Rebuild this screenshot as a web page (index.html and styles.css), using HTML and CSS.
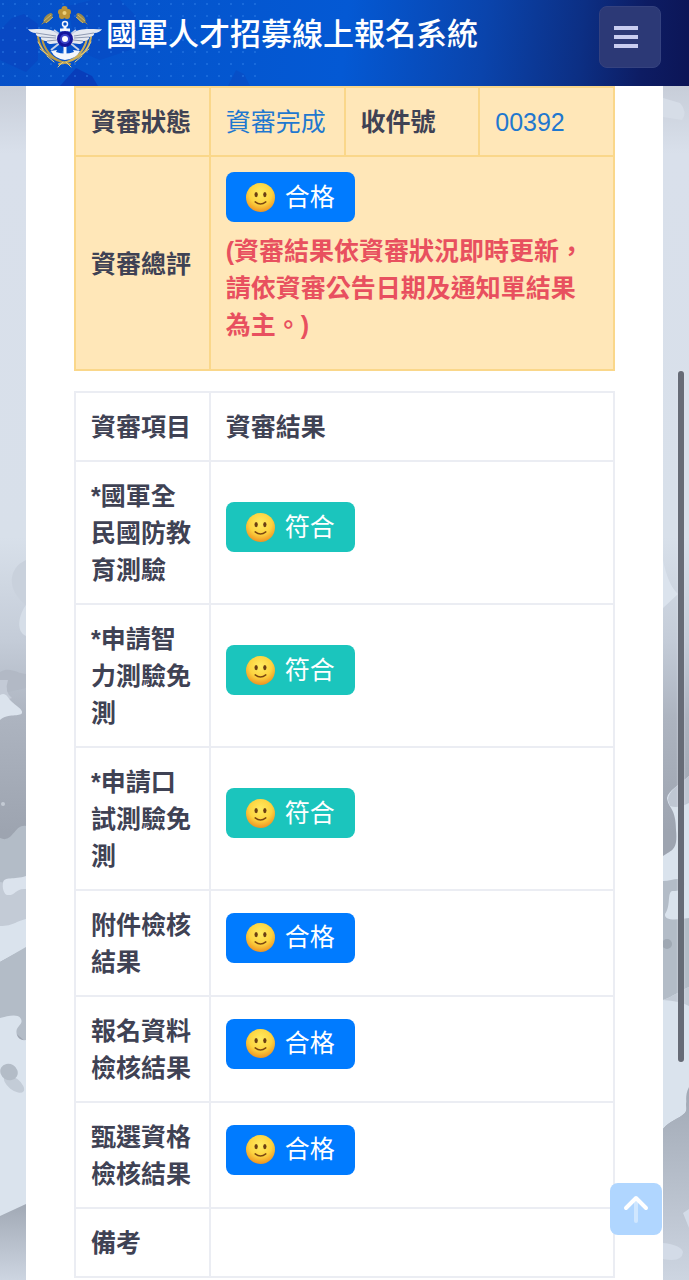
FILE: index.html
```html
<!DOCTYPE html>
<html lang="zh-Hant">

<head>
    <meta charset="utf-8">
    <meta content="width=device-width, initial-scale=1.0" name="viewport">

    <title>國軍人才招募線上報名系統</title>

    <link rel="stylesheet" href="styles.css">
</head>

<body>

    <!-- Camouflage background -->
    <svg class="camo" viewBox="0 0 689 1280" preserveAspectRatio="none" aria-hidden="true">
        <defs>
            <linearGradient id="sky" x1="0" y1="0" x2="0" y2="1">
                <stop offset="0.06" stop-color="#c5cbd6" />
                <stop offset="0.12" stop-color="#d9e0eb" />
                <stop offset="0.42" stop-color="#d8e0ea" />
                <stop offset="0.5" stop-color="#c4ccd8" />
                <stop offset="0.56" stop-color="#adb4c0" />
                <stop offset="0.65" stop-color="#9da4b0" />
            </linearGradient>
            <linearGradient id="ground" x1="0" y1="0" x2="0" y2="1">
                <stop offset="0" stop-color="#a1a9b5" />
                <stop offset="1" stop-color="#cdd5e1" />
            </linearGradient>
        </defs>
        <rect width="689" height="1280" fill="url(#sky)" />

        <path d="M26 560C8 568 6 590 26 605Z" fill="#c9d1dc" />
        <path d="M26 605C18 616 16 632 26 636Z" fill="#d6dee8" />
        <path d="M0 672C10 666 18 674 26 674V688L0 694Z" fill="#b2b9c5" />
        <path d="M0 680H8Q4 692 12 698L0 702Z" fill="#c3cad6" />
        <path d="M0 695C6 692 7 697 11 701C16 706 23 709 22 713C20 717 8 713 0 720Z" fill="#dbe3ed" />
        <circle cx="3" cy="804" r="2" fill="#c3cad4" />
        <path d="M0 838C13 844 14 824 26 826V890H0Z" fill="#b3bcc7" />
        <path d="M0 882L26 886V921C18 922 14 927 0 926Z" fill="#c3cbd6" />
        <path d="M3 883C4 876 14 880 26 876V889C15 888 16 896 7 895C4 894 2 888 3 883Z" fill="#dbe3ed" />
        <path d="M0 926C14 926 16 921 26 919V948L0 962Z" fill="#dae3ed" />
        <path d="M0 962L26 947V1042L0 1020Z" fill="#b3bcc7" />
        <path d="M0 1018C8 1016 18 1013 21 1019C24 1025 14 1026 17 1035Q19 1041 26 1040V1206L0 1217Z" fill="#dae3ed" />
        <ellipse cx="14" cy="1084" rx="12" ry="6" fill="#c3ccd7" transform="rotate(38 14 1084)" />
        <ellipse cx="9" cy="1072" rx="9" ry="8" fill="#b3bcc7" transform="rotate(30 9 1072)" />
        <path d="M0 1216L26 1204V1280H0Z" fill="url(#ground)" />

        <path d="M663 98L680 103Q688 112 682 120L663 117Z" fill="#d6dde7" />
        <path d="M663 560Q668 585 678 594L663 608Z" fill="#dbe3ed" />
        <path d="M663 856C672 850 678 850 676 830C676 808 668 808 667 798C668 791 680 784 689 776V960H663Z" fill="#dae3ed" />
        <path d="M668 800C668 791 680 784 689 776V803C681 807 676 808 670 806Z" fill="#bfc7d3" />
        <path d="M663 881C672 881 680 876 684 882C685 890 680 891 672 891C667 893 671 906 665 914C664 921 676 920 689 918V1000H663Z" fill="#b3bcc7" />
        <circle cx="667" cy="944" r="5" fill="#9fa8b3" />
        <path d="M663 1000C672 997 682 990 689 987V1100C683 1104 689 1108 685 1113C679 1119 669 1121 663 1129Z" fill="#dae3ed" />
        <path d="M663 1000C672 997 682 990 689 987V1006Q680 1001 663 1000Z" fill="#c3cbd6" />
        <path d="M663 1129C669 1121 679 1119 685 1113C689 1108 683 1098 689 1087V1280H663Z" fill="url(#ground)" />
        <path d="M689 1209L683 1213L689 1228ZM663 1243Q681 1245 683 1252Q682 1263 663 1259Z" fill="#d3dbe7" />
    </svg>

    <header class="topbar">
        <svg class="topbar-art" aria-hidden="true">
            <defs>
                <pattern id="dots" width="12" height="12" patternUnits="userSpaceOnUse">
                    <circle cx="3" cy="4" r="1" fill="#2f80ea" />
                </pattern>
            </defs>
            <path d="M0 30L12 18L24 14L38 24V60L26 72L0 60Z" fill="#0a3fbd" opacity="0.5" />
            <path d="M68 6L92 0H120L136 16V48L100 60L76 50Z" fill="#0a3fbd" opacity="0.3" />
            <path d="M60 86L76 68L92 76L98 86Z" fill="#0a35b2" opacity="0.7" />
            <path d="M228 86L236 70L244 74L250 86Z" fill="#0a49c2" opacity="0.6" />
            <rect width="260" height="86" fill="url(#dots)" opacity="0.6" />
        </svg>
        <a class="brand" href="#">
            <!-- Emblem -->
            <svg class="emblem" viewBox="6 4 76 64" aria-hidden="true">
                <g fill="none" stroke-linecap="round">
                    <path d="M16 35C18 48 25 57 48 62M20 36C22 48 30 56 38 59" stroke="#b99a45" stroke-width="2" />
                    <path d="M69 35C67 48 60 57 37 62M65 36C63 48 55 56 47 59" stroke="#cbae58" stroke-width="2" />
                    <path d="M16 40L21 48M18 47L26 53M25 54L32 60M69 40L64 48M67 47L59 53M60 54L53 60M36 65L41 60M49 65L44 60" stroke="#e0cb83" />
                    <path d="M20 22L30 13M65 22L55 13" stroke="#9b8a4c" />
                </g>
                <ellipse cx="26" cy="16" rx="6" ry="3" fill="#9b8a4c" transform="rotate(-48 26 16)" />
                <ellipse cx="59" cy="16" rx="6" ry="3" fill="#9b8a4c" transform="rotate(48 59 16)" />
                <path d="M22 19L29 13M24 21L31 15M63 19L56 13M61 21L54 15" stroke="#cbb76c" stroke-width="1" />
                <g fill="#bd9436">
                    <circle cx="42.500" cy="7" r="3" />
                    <circle cx="46" cy="10" r="3" />
                    <circle cx="45" cy="14" r="3" />
                    <circle cx="40" cy="14" r="3" />
                    <circle cx="39" cy="10" r="3" />
                </g>
                <circle cx="42.500" cy="11" r="2" fill="#ecd07a" />
                <path d="M6 27C15 28 28 24 38 33L37 41L29 42C26 42 24 40 25 39C21 39 18 37 19 35C15 35 13 32 14 31C10 31 7 29 6 27Z" fill="#e4e8f1" />
                <path d="M80 27C71 28 58 24 48 33L49 41L57 42C60 42 62 40 61 39C65 39 68 37 67 35C71 35 73 32 72 31C76 31 79 29 80 27Z" fill="#e4e8f1" />
                <path d="M14 31L34 34M19 35L34 36M25 39L35 38M72 31L52 34M67 35L52 36M61 39L51 38" stroke="#8f9ab2" stroke-width="1" />
                <path d="M29 48L54 28M57 48L32 28" stroke="#c6d0e6" stroke-width="2" />
                <circle cx="43" cy="22" r="2.500" fill="none" stroke="#f3f6fc" stroke-width="1.500" />
                <path d="M43 25V54M38 28H48" stroke="#f3f6fc" stroke-width="3" />
                <path d="M29 49L35 48L34 50Q43 53 52 50L51 48L58 49Q54 57 43 58Q33 57 29 49Z" fill="#f3f6fc" />
                <circle cx="43" cy="37" r="8" fill="#15159c" />
                <circle cx="43" cy="37" r="5" fill="#3c44c8" />
                <circle cx="43" cy="37" r="3" fill="#fff" />
            </svg>
            <span class="brand-name">國軍人才招募線上報名系統</span>
        </a>
        <button class="menu-button" type="button" aria-label="選單">
            <svg viewBox="0 0 24 22" aria-hidden="true">
                <path d="M0 2H24M0 11H24M0 20H24" stroke="#c9cdf0" stroke-width="4" />
            </svg>
        </button>
    </header>

    <!-- Shared smiley face -->
    <svg class="symbols" aria-hidden="true">
        <defs>
            <radialGradient id="face" cx="0.5" cy="0.35" r="0.65">
                <stop offset="0" stop-color="#ffec62" />
                <stop offset="0.6" stop-color="#fdd33f" />
                <stop offset="1" stop-color="#ee9322" />
            </radialGradient>
        </defs>
        <symbol id="smile" viewBox="0 0 30 30">
            <circle cx="15" cy="15" r="15" fill="url(#face)" />
            <ellipse cx="10.500" cy="12" rx="1.700" ry="2.700" fill="#6b3e12" />
            <ellipse cx="19.500" cy="12" rx="1.700" ry="2.700" fill="#6b3e12" />
            <path d="M9.500 19.500Q15 24 20.500 19.500" fill="none" stroke="#7b4712" stroke-width="1.500" stroke-linecap="round" />
        </symbol>
    </svg>

    <main class="sheet">
        <table class="summary">
            <tbody>
                <tr>
                    <th scope="row">資審狀態</th>
                    <td class="value">資審完成</td>
                    <th scope="row">收件號</th>
                    <td class="value">00392</td>
                </tr>
                <tr>
                    <th scope="row">資審總評</th>
                    <td colspan="3">
                        <button class="result pass" type="button"><svg><use href="#smile" /></svg>合格</button>
                        <p class="note">(資審結果依資審狀況即時更新，請依資審公告日期及通知單結果為主。)</p>
                    </td>
                </tr>
            </tbody>
        </table>

        <table class="items">
            <thead>
                <tr>
                    <th class="item" scope="col">資審項目</th>
                    <th scope="col">資審結果</th>
                </tr>
            </thead>
            <tbody>
                <tr>
                    <th scope="row">*國軍全民國防教育測驗</th>
                    <td><button class="result match" type="button"><svg><use href="#smile" /></svg>符合</button></td>
                </tr>
                <tr>
                    <th scope="row">*申請智力測驗免測</th>
                    <td><button class="result match" type="button"><svg><use href="#smile" /></svg>符合</button></td>
                </tr>
                <tr>
                    <th scope="row">*申請口試測驗免測</th>
                    <td><button class="result match" type="button"><svg><use href="#smile" /></svg>符合</button></td>
                </tr>
                <tr>
                    <th scope="row">附件檢核結果</th>
                    <td><button class="result pass" type="button"><svg><use href="#smile" /></svg>合格</button></td>
                </tr>
                <tr>
                    <th scope="row">報名資料檢核結果</th>
                    <td><button class="result pass" type="button"><svg><use href="#smile" /></svg>合格</button></td>
                </tr>
                <tr>
                    <th scope="row">甄選資格檢核結果</th>
                    <td><button class="result pass" type="button"><svg><use href="#smile" /></svg>合格</button></td>
                </tr>
                <tr>
                    <th scope="row">備考</th>
                    <td></td>
                </tr>
            </tbody>
        </table>
    </main>

    <a class="to-top" href="#" aria-label="回到頂端">
        <svg viewBox="0 0 26 28" aria-hidden="true">
            <path d="M13 5V26" stroke="#d0e7ff" stroke-width="4" stroke-linecap="round" />
            <path d="M3 13L13 3L23 13" fill="none" stroke="#fff" stroke-width="4" stroke-linecap="round" stroke-linejoin="round" />
        </svg>
    </a>
    <div class="scroll-thumb"></div>

</body>

</html>
```
FILE: styles.css
```css
* {
    box-sizing: border-box;
}

body {
    font-family: "Liberation Sans", "Noto Sans CJK TC", sans-serif;
    font-size: 25px;
    line-height: 37px;
    color: #3f4254;
    margin: 0;
    background-color: #d9e0eb;
}

.camo {
    position: fixed;
    top: 0;
    left: 0;
    width: 100%;
    height: 100%;
    z-index: -1;
}

.symbols {
    position: absolute;
    width: 0;
    height: 0;
}

/* Top bar */
.topbar {
    position: sticky;
    top: 0;
    z-index: 10;
    display: flex;
    justify-content: space-between;
    align-items: flex-start;
    height: 86px;
    padding: 6px 28px;
    background: linear-gradient(95deg, #0650c8 0%, #0456cf 30%, #0459d4 50%, #0a44ac 70%, #0c2f84 84%, #0d1c63 93%, #0c1556 100%);
}

.topbar-art {
    position: absolute;
    top: 0;
    left: 0;
    width: 100%;
    height: 100%;
}

.brand {
    position: relative;
    display: flex;
    gap: 2px;
    color: #fff;
    text-decoration: none;
}

.emblem {
    width: 76px;
    height: 64px;
}

.brand-name {
    font-size: 31px;
    font-weight: 500;
    line-height: 57px;
    white-space: nowrap;
}

.menu-button {
    position: relative;
    display: flex;
    align-items: center;
    justify-content: center;
    width: 62px;
    height: 62px;
    padding: 0 8px 0 0;
    border: 1px solid #35427f;
    border-radius: 8px;
    background-color: #2c3976;
}

.menu-button svg {
    width: 24px;
    height: 22px;
}

/* Content sheet */
.sheet {
    min-height: calc(100vh - 86px);
    margin: 0 26px;
    padding: 0 48px;
    background-color: #fff;
}

table {
    width: 100%;
    table-layout: fixed;
    border-collapse: collapse;
}

th,
td {
    padding: 15px;
    border: 2px solid #ebedf3;
    text-align: left;
    vertical-align: middle;
}

th,
.value {
    padding: 16px 15px 14px;
}

th {
    font-weight: 600;
}

.item {
    width: 25%;
}

.summary {
    margin-bottom: 20px;
    background-color: #ffe7b8;
}

.summary th,
.summary td {
    border-color: #fad78a;
}

.summary .value {
    color: #1f78cf;
}

.note {
    margin: 0 0 10px;
    font-weight: 600;
    color: #e8505f;
}

.result {
    display: flex;
    align-items: center;
    gap: 10px;
    height: 50px;
    margin: 0 0 11px;
    padding: 0 20px;
    border: 0;
    border-radius: 8px;
    font-family: inherit;
    font-size: 25px;
    line-height: 37px;
    color: #fff;
}

.result svg {
    width: 29px;
    height: 29px;
}

.pass {
    background-color: #007bff;
}

.match {
    background-color: #1bc5bd;
}

/* Floating controls */
.to-top {
    position: fixed;
    right: 27px;
    bottom: 45px;
    display: flex;
    align-items: center;
    justify-content: center;
    width: 52px;
    height: 52px;
    border-radius: 8px;
    background-color: #b0d6ff;
}

.to-top svg {
    width: 26px;
    height: 28px;
}

.scroll-thumb {
    position: fixed;
    top: 29%;
    right: 5px;
    width: 6px;
    height: 54%;
    border-radius: 3px;
    background-color: #666b76;
    box-shadow: 0 0 2px #e3e7ee;
}
```
